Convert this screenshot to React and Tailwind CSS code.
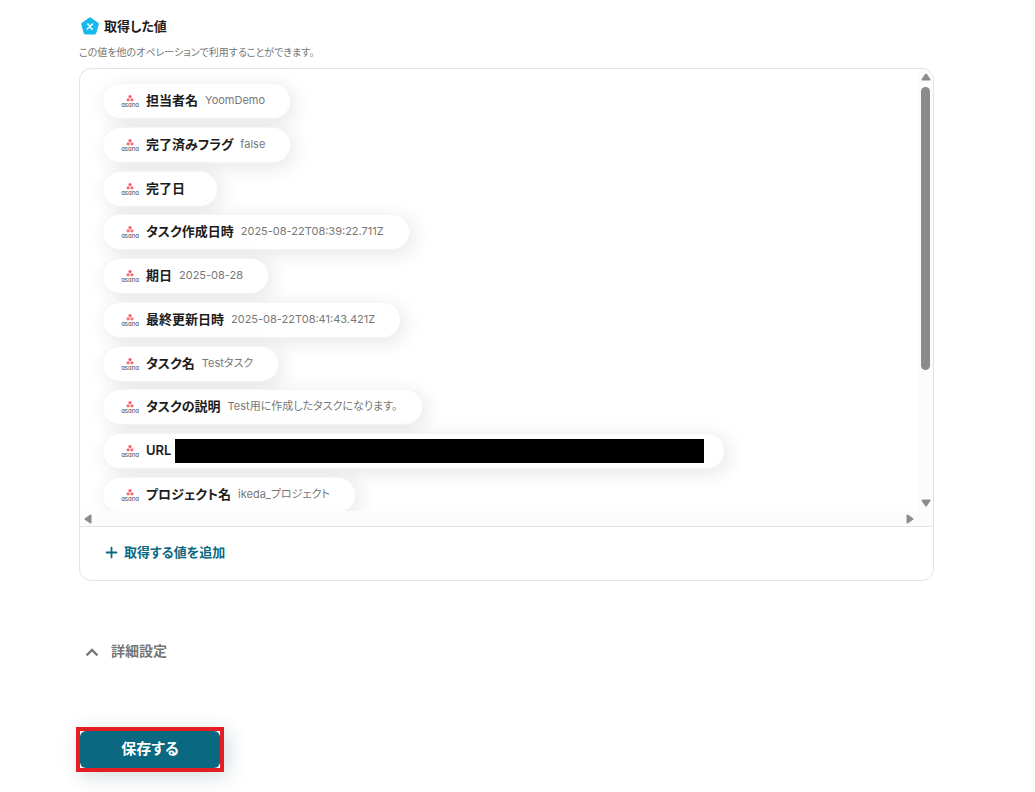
import { useState } from 'react';
import { Plus } from 'lucide-react';

const outputs = [
  { name: '担当者名', value: 'YoomDemo' },
  { name: '完了済みフラグ', value: 'false' },
  { name: '完了日', value: '' },
  { name: 'タスク作成日時', value: '2025-08-22T08:39:22.711Z' },
  { name: '期日', value: '2025-08-28' },
  { name: '最終更新日時', value: '2025-08-22T08:41:43.421Z' },
  { name: 'タスク名', value: 'Testタスク' },
  { name: 'タスクの説明', value: 'Test用に作成したタスクになります。' },
  { name: 'URL', masked: true },
  { name: 'プロジェクト名', value: 'ikeda_プロジェクト' },
];

const AsanaLogo = () => (
  <svg width="18" height="14" viewBox="0 0 18 14" className="shrink-0 overflow-visible" aria-hidden="true">
    <circle cx="9" cy="2.6" r="1.6" fill="#fb5a6c" />
    <circle cx="7.1" cy="5.8" r="1.6" fill="#fb6a70" />
    <circle cx="10.9" cy="5.8" r="1.6" fill="#fb6a70" />
    <text x="9" y="12.5" fontSize="6" textAnchor="middle" className="fill-[#3d4152] font-['Inter',sans-serif] [font-feature-settings:'cv11']">asana</text>
  </svg>
);

const ValueIcon = () => (
  <svg width="20" height="18" viewBox="0 0 20 18" className="shrink-0" aria-hidden="true">
    <path d="M11 2.2 18 7.1 15.6 15.6H6.4L4 7.1Z" fill="#15b9ec" stroke="#15b9ec" strokeWidth="3.6" strokeLinejoin="round" />
    <path d="M8.3 7.1h1l3.3 5h1M13.6 7.1 8.3 12.1" fill="none" stroke="#fff" strokeWidth="1.4" strokeLinecap="round" />
  </svg>
);

const Arrow = ({ className }) => (
  <svg width="10" height="8" viewBox="0 0 10 8" className={className} aria-hidden="true">
    <path d="M5 1.5 8.5 6.5H1.5Z" fill="#8b8b8b" stroke="#8b8b8b" strokeWidth="2" strokeLinejoin="round" />
  </svg>
);

const Chevron = ({ className }) => (
  <svg width="18" height="18" viewBox="0 0 18 18" className={className} aria-hidden="true">
    <path d="M3.6 13.3 9 8l5.4 5.3" fill="none" stroke="currentColor" strokeWidth="2.4" />
  </svg>
);

const OutputPill = ({ item }) => (
  <li className="flex h-9 w-fit items-center rounded-full border border-[#f5f5f5] bg-white pl-[18px] pr-5 shadow-[4px_4px_20px_rgba(0,0,0,0.1)]">
    <AsanaLogo />
    <span className="ml-[7px] pb-0.5 text-[13px] font-semibold leading-5 text-[#1c1c1c]">{item.name}</span>
    {item.masked ? (
      <span className="ml-1 h-6 w-[529px] bg-black" />
    ) : (
      <span className="ml-[7px] mr-[5px] pb-0.5 text-[11px] leading-5 text-[#777]">{item.value}</span>
    )}
  </li>
);

const App = () => {
  const [open, setOpen] = useState(true);

  return (
    <main className="bg-white pb-5 pl-[79px] pr-[101px] pt-4 font-['Inter','Noto_Sans_CJK_JP',sans-serif] [font-feature-settings:'palt']" lang="ja">
      <header>
        <h1 className="flex items-center gap-[5px] text-[13px] font-semibold leading-5 text-[#1c1c1c]">
          <ValueIcon />
          取得した値
        </h1>
        <p className="mt-2 text-[10px] leading-4 text-[#777]">この値を他のオペレーションで利用することができます。</p>
      </header>

      <section className="mt-2 overflow-hidden rounded-xl border border-[#e3e3e3]">
        <div className="flex h-[442px]">
          <div className="min-w-0 flex-1 overflow-hidden pl-[22px] pt-3.5">
            <ul className="flex h-[430px] flex-col justify-between">
              {outputs.map((item) => (
                <OutputPill key={item.name} item={item} />
              ))}
            </ul>
          </div>
          {/* Scrollbar */}
          <div className="flex w-[15px] shrink-0 flex-col items-center bg-[#fcfcfc] py-1">
            <Arrow />
            <div className="mt-1.5 h-[283px] w-[9px] rounded-full bg-[#8b8b8b]" />
            <Arrow className="mt-auto rotate-180" />
          </div>
        </div>
        <div className="flex h-[15px] items-center justify-between bg-[#fcfcfc] pl-[3px] pr-[18px]">
          <Arrow className="-rotate-90" />
          <Arrow className="rotate-90" />
        </div>

        <div className="border-t border-[#e3e3e3] px-[23px] pb-[18px] pt-[15px]">
          <button type="button" className="flex items-center gap-1 text-[13px] font-semibold leading-5 text-[#0a6880]">
            <Plus size={17} strokeWidth={2.5} />
            取得する値を追加
          </button>
        </div>
      </section>

      <button
        type="button"
        aria-expanded={open}
        onClick={() => setOpen(!open)}
        className="ml-1 mt-[58px] flex items-center gap-2.5 text-sm font-semibold leading-6 text-[#777]"
      >
        <Chevron className={open ? '' : 'rotate-180'} />
        詳細設定
      </button>

      {/* Save */}
      <div className="-ml-[3px] mt-16 w-fit border-4 border-[#e31e24] shadow-[4px_4px_20px_rgba(10,60,80,0.18)]">
        <button type="button" className="block h-[37px] w-[140px] rounded-md bg-[#0a6880] text-[15px] font-bold text-white">
          保存する
        </button>
      </div>
    </main>
  );
};

export default App;
